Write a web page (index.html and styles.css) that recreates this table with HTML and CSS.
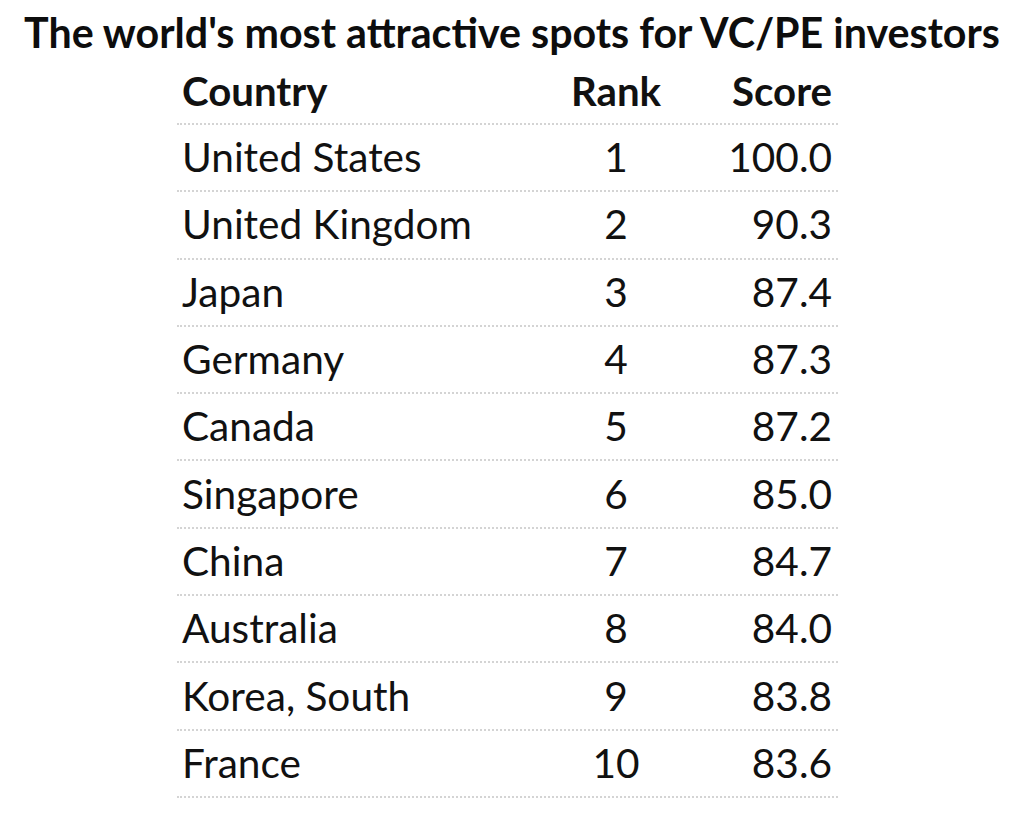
FILE: index.html
```html
<!DOCTYPE html>
<html>
<head>
<meta charset="utf-8">
<link rel="stylesheet" href="styles.css">
</head>
<body>
<div class="page">
  <h1 class="title">The world's most attractive spots for VC/PE investors</h1>
  <div class="table">
    <div class="row head"><span class="c">Country</span><span class="r">Rank</span><span class="s">Score</span></div>
    <div class="row"><span class="c">United States</span><span class="r">1</span><span class="s">100.0</span></div>
    <div class="row"><span class="c">United Kingdom</span><span class="r">2</span><span class="s">90.3</span></div>
    <div class="row"><span class="c">Japan</span><span class="r">3</span><span class="s">87.4</span></div>
    <div class="row"><span class="c">Germany</span><span class="r">4</span><span class="s">87.3</span></div>
    <div class="row"><span class="c">Canada</span><span class="r">5</span><span class="s">87.2</span></div>
    <div class="row"><span class="c">Singapore</span><span class="r">6</span><span class="s">85.0</span></div>
    <div class="row"><span class="c">China</span><span class="r">7</span><span class="s">84.7</span></div>
    <div class="row"><span class="c">Australia</span><span class="r">8</span><span class="s">84.0</span></div>
    <div class="row"><span class="c">Korea, South</span><span class="r">9</span><span class="s">83.8</span></div>
    <div class="row"><span class="c">France</span><span class="r">10</span><span class="s">83.6</span></div>
  </div>
</div>
</body>
</html>
```
FILE: styles.css
```css
html, body {
  margin: 0;
  padding: 0;
  background: #ffffff;
}
body {
  width: 1024px;
  height: 818px;
  overflow: hidden;
  font-family: Lato, "Open Sans", sans-serif;
  color: #111111;
}
.page {
  display: flex;
  flex-direction: column;
}
.title {
  margin: 0;
  height: 66px;
  padding-bottom: 2px;
  box-sizing: border-box;
  display: flex;
  align-items: center;
  justify-content: center;
  font-size: 41.2px;
  font-weight: 700;
  color: #0d0d0d;
  white-space: nowrap;
}
.table {
  margin-left: 177px;
  width: 661px;
  display: flex;
  flex-direction: column;
}
.row {
  display: grid;
  grid-template-columns: 389px 100px 172px;
  align-items: center;
  height: 67.3px;
  padding-bottom: 2px;
  box-sizing: border-box;
  border-bottom: 2px dotted #d4d4d4;
  font-size: 40.6px;
}
.row.head {
  height: 59px;
  padding-bottom: 13px;
  font-size: 40.2px;
  font-weight: 700;
}
.c {
  padding-left: 5px;
}
.r {
  text-align: center;
}
.s {
  text-align: right;
  padding-right: 6px;
}
```
